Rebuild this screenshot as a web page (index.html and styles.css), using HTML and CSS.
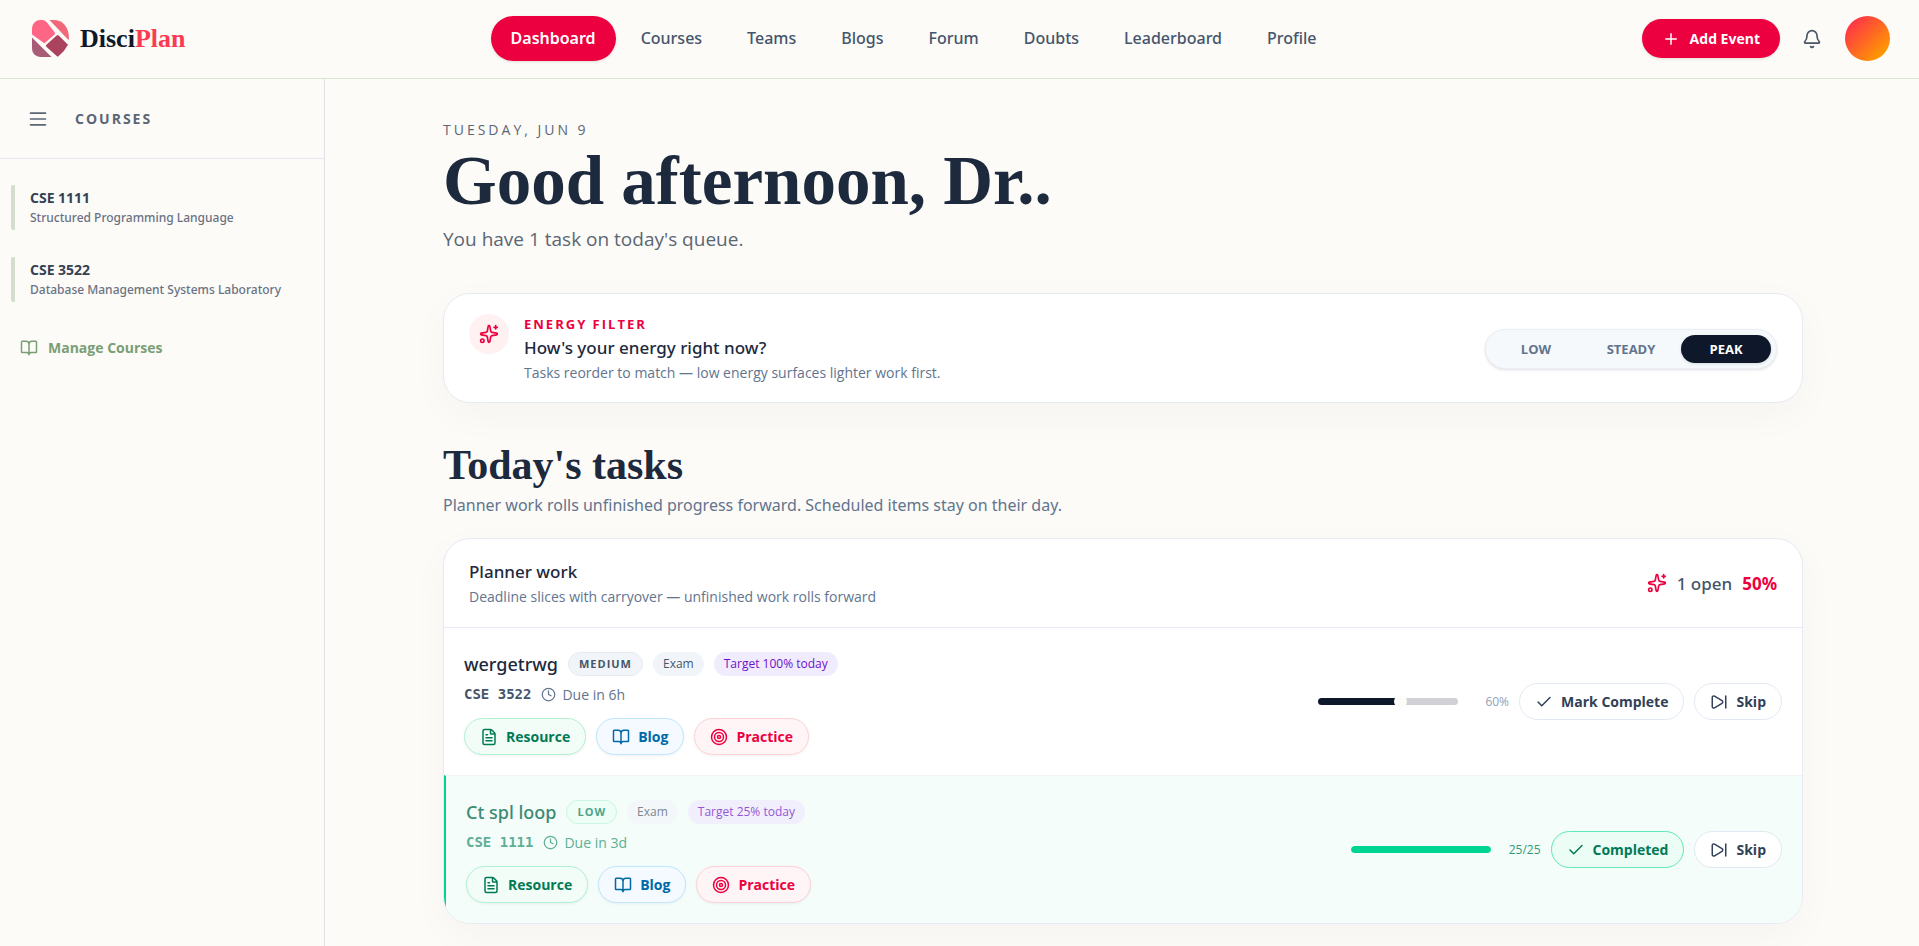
FILE: index.html
```html
<!DOCTYPE html>
<html lang="en">
<head>
<meta charset="utf-8">
<meta name="viewport" content="width=device-width, initial-scale=1">
<title>DisciPlan</title>
<link rel="stylesheet" href="styles.css">
</head>
<body>
<svg class="sprite" aria-hidden="true">
  <symbol id="i-plus" viewBox="0 0 24 24"><path d="M5 12h14M12 5v14"/></symbol>
  <symbol id="i-bell" viewBox="0 0 24 24"><path d="M10.27 21a2 2 0 0 0 3.46 0M3.26 15.33A1 1 0 0 0 4 17h16a1 1 0 0 0 .74-1.67C19.41 13.96 18 12.5 18 8A6 6 0 0 0 6 8c0 4.5-1.41 5.96-2.74 7.33"/></symbol>
  <symbol id="i-menu" viewBox="0 0 24 24"><path d="M3 5h18M3 12h18M3 19h18"/></symbol>
  <symbol id="i-book" viewBox="0 0 24 24"><path d="M12 7v14M3 18a1 1 0 0 1-1-1V4a1 1 0 0 1 1-1h5a4 4 0 0 1 4 4 4 4 0 0 1 4-4h5a1 1 0 0 1 1 1v13a1 1 0 0 1-1 1h-6a3 3 0 0 0-3 3 3 3 0 0 0-3-3z"/></symbol>
  <symbol id="i-sparkles" viewBox="0 0 24 24"><path d="M11.02 2.81a1 1 0 0 1 1.96 0l1.05 5.56a2 2 0 0 0 1.6 1.6l5.56 1.05a1 1 0 0 1 0 1.96l-5.56 1.05a2 2 0 0 0-1.6 1.6l-1.05 5.56a1 1 0 0 1-1.96 0l-1.05-5.56a2 2 0 0 0-1.6-1.6l-5.56-1.05a1 1 0 0 1 0-1.96l5.56-1.05a2 2 0 0 0 1.6-1.6zM20 2v4M22 4h-4"/><circle cx="4" cy="20" r="2"/></symbol>
  <symbol id="i-clock" viewBox="0 0 24 24"><circle cx="12" cy="12" r="10"/><path d="M12 6v6l4 2"/></symbol>
  <symbol id="i-file" viewBox="0 0 24 24"><path d="M6 22a2 2 0 0 1-2-2V4a2 2 0 0 1 2-2h8a2.4 2.4 0 0 1 1.7.7l3.6 3.6a2.4 2.4 0 0 1 .7 1.7v12a2 2 0 0 1-2 2zM14 2v5a1 1 0 0 0 1 1h5M10 9H8M16 13H8M16 17H8"/></symbol>
  <symbol id="i-target" viewBox="0 0 24 24"><circle cx="12" cy="12" r="10"/><circle cx="12" cy="12" r="6"/><circle cx="12" cy="12" r="2"/></symbol>
  <symbol id="i-check" viewBox="0 0 24 24"><path d="M20 6 9 17l-5-5"/></symbol>
  <symbol id="i-skip" viewBox="0 0 24 24"><path d="M21 4v16M6.03 4.29A2 2 0 0 0 3 6v12a2 2 0 0 0 3.03 1.71l10-5.99a2 2 0 0 0 0-3.44z"/></symbol>
</svg>

<header class="topbar">
  <a class="brand" href="#">
    <svg class="brand-mark" viewBox="0 0 36 36" aria-hidden="true">
      <path fill="#ff6685" d="M0 14V8a8 8 0 0 1 8-8h2q3 0 5 3l7 9q1 1 0 2l-9 8q-1 1-2 0z"/>
      <path fill="#f0687a" d="M17 0h4c9 0 15 7 15 18q0 2-1 1z"/>
      <path fill="#a85c75" d="M0 17l19 19H8a8 8 0 0 1-8-8z"/>
      <path fill="#ab435f" d="M14 24l10-9q1-1 2 0l9 9q-3 6-9 11-1 1-2 0L14 26q-1-1 0-2z"/>
    </svg>
    <span class="brand-name">Disci<span class="brand-accent">Plan</span></span>
  </a>
  <nav class="nav">
    <a class="nav-link active" href="#">Dashboard</a>
    <a class="nav-link" href="#">Courses</a>
    <a class="nav-link" href="#">Teams</a>
    <a class="nav-link" href="#">Blogs</a>
    <a class="nav-link" href="#">Forum</a>
    <a class="nav-link" href="#">Doubts</a>
    <a class="nav-link" href="#">Leaderboard</a>
    <a class="nav-link" href="#">Profile</a>
  </nav>
  <div class="actions">
    <button class="add-event" type="button"><svg class="icon"><use href="#i-plus"/></svg>Add Event</button>
    <button class="bell" type="button" aria-label="Notifications"><svg class="icon"><use href="#i-bell"/></svg></button>
    <button class="avatar" type="button" aria-label="Account"></button>
  </div>
</header>

<div class="shell">
  <aside class="sidebar">
    <div class="sidebar-head">
      <button class="menu" type="button" aria-label="Toggle sidebar"><svg class="icon"><use href="#i-menu"/></svg></button>
      <h2 class="sidebar-title">COURSES</h2>
    </div>
    <div class="course-list">
      <a class="course" href="#"><span class="course-code">CSE 1111</span><span class="course-name">Structured Programming Language</span></a>
      <a class="course" href="#"><span class="course-code">CSE 3522</span><span class="course-name">Database Management Systems Laboratory</span></a>
    </div>
    <a class="manage" href="#"><svg class="icon"><use href="#i-book"/></svg>Manage Courses</a>
  </aside>

  <main class="main">
    <p class="date">TUESDAY, JUN 9</p>
    <h1 class="greeting">Good afternoon, Dr..</h1>
    <p class="summary">You have 1 task on today's queue.</p>

    <section class="card energy">
      <span class="energy-icon"><svg class="icon"><use href="#i-sparkles"/></svg></span>
      <div class="energy-text">
        <p class="eyebrow">ENERGY FILTER</p>
        <h2 class="card-title">How's your energy right now?</h2>
        <p class="card-note">Tasks reorder to match — low energy surfaces lighter work first.</p>
      </div>
      <div class="segmented">
        <button type="button">LOW</button>
        <button type="button">STEADY</button>
        <button class="selected" type="button">PEAK</button>
      </div>
    </section>

    <h2 class="section-title">Today's tasks</h2>
    <p class="section-note">Planner work rolls unfinished progress forward. Scheduled items stay on their day.</p>

    <section class="card planner">
      <header class="planner-head">
        <div>
          <h3 class="card-title">Planner work</h3>
          <p class="card-note">Deadline slices with carryover — unfinished work rolls forward</p>
        </div>
        <div class="stats"><svg class="icon"><use href="#i-sparkles"/></svg><span>1 open</span><strong>50%</strong></div>
      </header>

      <article class="task">
        <div class="task-info">
          <div class="task-top"><h4 class="task-name">wergetrwg</h4><span class="pill level">MEDIUM</span><span class="pill">Exam</span><span class="pill goal">Target 100% today</span></div>
          <div class="task-meta"><span class="code">CSE 3522</span><span class="due"><svg class="icon"><use href="#i-clock"/></svg>Due in 6h</span></div>
          <div class="task-links">
            <button class="btn green" type="button"><svg class="icon"><use href="#i-file"/></svg>Resource</button>
            <button class="btn blue" type="button"><svg class="icon"><use href="#i-book"/></svg>Blog</button>
            <button class="btn rose" type="button"><svg class="icon"><use href="#i-target"/></svg>Practice</button>
          </div>
        </div>
        <div class="task-side">
          <input class="slider" type="range" min="0" max="100" value="60" style="--value: 60%" aria-label="Progress of wergetrwg">
          <span class="amount wide">60%</span>
          <button class="btn" type="button"><svg class="icon"><use href="#i-check"/></svg>Mark Complete</button>
          <button class="btn skip" type="button"><svg class="icon"><use href="#i-skip"/></svg>Skip</button>
        </div>
      </article>

      <article class="task done">
        <div class="task-info">
          <div class="task-top"><h4 class="task-name">Ct spl loop</h4><span class="pill level">LOW</span><span class="pill">Exam</span><span class="pill goal">Target 25% today</span></div>
          <div class="task-meta"><span class="code">CSE 1111</span><span class="due"><svg class="icon"><use href="#i-clock"/></svg>Due in 3d</span></div>
          <div class="task-links">
            <button class="btn green" type="button"><svg class="icon"><use href="#i-file"/></svg>Resource</button>
            <button class="btn blue" type="button"><svg class="icon"><use href="#i-book"/></svg>Blog</button>
            <button class="btn rose" type="button"><svg class="icon"><use href="#i-target"/></svg>Practice</button>
          </div>
        </div>
        <div class="task-side">
          <div class="bar"><div class="bar-fill" style="width: 100%"></div></div>
          <span class="amount">25/25</span>
          <button class="btn complete" type="button"><svg class="icon"><use href="#i-check"/></svg>Completed</button>
          <button class="btn skip" type="button"><svg class="icon"><use href="#i-skip"/></svg>Skip</button>
        </div>
      </article>
    </section>
  </main>
</div>
</body>
</html>
```
FILE: styles.css
```css
* { box-sizing: border-box; }

:root {
  --font-text: "Segoe UI", "Open Sans", "Noto Sans", sans-serif;
  --font-medium: "Segoe UI", "Noto Sans", sans-serif;
  --font-display: Georgia, "Liberation Serif", serif;
}

body {
  margin: 0;
  min-height: 100vh;
  display: flex;
  flex-direction: column;
  background: #fcfbf7;
  color: #1d293d;
  font-family: var(--font-text);
  font-size: 16px;
}

h1, h2, h3, h4, p { margin: 0; font-weight: 400; }
a { color: inherit; text-decoration: none; }
button { font: inherit; color: inherit; border: 0; background: none; padding: 0; cursor: pointer; }

.sprite { display: none; }
.icon {
  width: 18px;
  height: 18px;
  flex: none;
  fill: none;
  stroke: currentColor;
  stroke-width: 2;
  stroke-linecap: round;
  stroke-linejoin: round;
}

/* Top bar */
.topbar {
  display: flex;
  align-items: center;
  justify-content: space-between;
  height: 79px;
  padding: 0 29px 1px 32px;
  border-bottom: 1px solid #d9e4d3;
}
.brand { display: flex; align-items: center; gap: 11px; }
.brand-mark { width: 37px; height: 37px; }
.brand-name {
  font-family: var(--font-display);
  font-size: 26px;
  font-weight: 700;
  color: #0f172b;
}
.brand-accent { color: #fb3b52; }
.nav { display: flex; gap: 5px; }
.nav-link {
  padding: 0 20px;
  border-radius: 24px;
  font-family: var(--font-medium);
  font-size: 16px;
  font-weight: 500;
  line-height: 45px;
  color: #45556c;
}
.nav-link.active { background: #ec003f; color: #fff; font-weight: 600; box-shadow: 0 1px 3px #0000001f; }
.actions { display: flex; align-items: center; justify-content: flex-end; }
.add-event {
  display: flex;
  align-items: center;
  gap: 10px;
  height: 39px;
  padding: 0 20px;
  border-radius: 20px;
  background: #ec003f;
  color: #fff;
  font-size: 14px;
  font-weight: 700;
  box-shadow: 0 1px 3px #0000001f;
}
.bell { width: 45px; height: 45px; margin: 0 10px; display: grid; place-items: center; color: #4a5565; }
.bell .icon { width: 20px; height: 20px; }
.avatar { width: 45px; height: 45px; border-radius: 50%; background: linear-gradient(135deg, #ff2056, #fe9a00 85%); }

/* Sidebar */
.shell { display: flex; flex: 1; }
.sidebar { width: 325px; flex: none; border-right: 1px solid #dfe3e8; }
.sidebar-head {
  display: flex;
  align-items: center;
  gap: 27px;
  height: 80px;
  padding: 0 28px;
  border-bottom: 1px solid #e6eaee;
}
.menu { display: grid; color: #5b6675; }
.menu .icon { width: 20px; height: 20px; }
.sidebar-title { font-size: 14px; font-weight: 700; letter-spacing: 2px; color: #5b6675; }
.course-list { display: grid; gap: 27px; padding: 26px 11px 0; }
.course {
  display: grid;
  align-content: center;
  height: 45px;
  padding-left: 15px;
  border-left: 4px solid #d3decf;
  border-radius: 2px;
}
.course-code { font-size: 14px; font-weight: 700; line-height: 21px; color: #364153; }
.course-name { font-family: var(--font-medium); font-size: 12px; font-weight: 500; line-height: 20px; color: #6a7282; white-space: nowrap; }
.manage {
  display: flex;
  align-items: center;
  gap: 10px;
  padding: 36px 20px;
  font-size: 14px;
  font-weight: 700;
  color: #7a9e75;
}

/* Main column */
.main { flex: 1; min-width: 0; max-width: 1440px; margin: 0 auto; padding: 40px 39px 22px 41px; }
.date { font-size: 14px; line-height: 22px; letter-spacing: 3px; color: #5b6675; }
.greeting {
  font-family: var(--font-display);
  font-size: 69px;
  font-weight: 700;
  line-height: 80px;
}
.summary { padding-top: 2px; font-size: 19px; line-height: 32px; color: #5b6675; }
.card {
  background: #fff;
  border: 1px solid #e6eaf2;
  border-radius: 27px;
  box-shadow: 0 12px 40px #0f172b08;
}
.energy { display: flex; align-items: flex-start; margin-top: 38px; padding: 20px 25px 18px; }
.energy-icon {
  display: grid;
  place-items: center;
  width: 40px;
  height: 40px;
  margin-right: 15px;
  border-radius: 50%;
  background: #fff0f1;
  color: #ec003f;
}
.energy-icon .icon { width: 20px; height: 20px; }
.energy-text { flex: 1; }
.eyebrow { font-size: 13px; font-weight: 700; line-height: 20px; letter-spacing: 2px; color: #ec003f; }
.card-title { font-family: var(--font-medium); font-size: 17px; font-weight: 500; line-height: 27px; color: #1d293d; }
.card-note { font-size: 14px; line-height: 23px; color: #62748e; }
.segmented {
  display: grid;
  grid-template-columns: repeat(3, 90px);
  gap: 5px;
  align-self: center;
  padding: 5px;
  border: 1px solid #eaeff5;
  border-radius: 20px;
  background: #f5f9fc;
  box-shadow: 0 1px 3px #0000001f;
}
.segmented button { height: 28px; border-radius: 14px; font-size: 13px; font-weight: 700; color: #62748e; }
.segmented .selected { background: #0f172b; color: #fff; box-shadow: 0 1px 3px #0000001f; }

.section-title {
  margin-top: 38px;
  font-family: var(--font-display);
  font-size: 42px;
  font-weight: 700;
  line-height: 48px;
}
.section-note { margin-bottom: 16px; font-family: var(--font-medium); font-size: 16px; line-height: 33px; color: #62748e; }

.planner { overflow: hidden; }
.planner-head {
  display: flex;
  align-items: center;
  justify-content: space-between;
  padding: 19px 25px;
  border-bottom: 1px solid #e6eaf2;
}
.stats { display: flex; align-items: center; gap: 10px; font-family: var(--font-medium); font-size: 17px; font-weight: 500; color: #45556c; }
.stats .icon { width: 20px; height: 20px; color: #ec003f; }
.stats strong { font-weight: 700; color: #ec003f; }

.task { display: flex; align-items: center; justify-content: space-between; padding: 20px; }
.task.done { border-left: 2px solid #00d492; background: #f4fdf9; border-top: 1px solid #eff5f6; }
.task-top { display: flex; align-items: center; gap: 10px; }
.task-name { font-family: var(--font-medium); font-size: 18px; font-weight: 500; line-height: 32px; }
.pill {
  padding: 0 10px;
  border-radius: 12px;
  background: #f1f5f9;
  font-size: 12px;
  font-weight: 500;
  line-height: 24px;
  color: #45556c;
}
.pill.level { border: 1px solid #e6ebf1; font-size: 11px; font-weight: 700; line-height: 22px; letter-spacing: 1px; }
.pill.goal { background: #f1ebfe; color: #6d11c9; }
.task-meta { display: flex; align-items: center; gap: 10px; height: 26px; margin: 1px 0 11px; }
.code { font-family: "DejaVu Sans Mono", monospace; font-size: 14px; font-weight: 700; color: #45556c; }
.due { display: flex; align-items: center; gap: 6px; font-size: 14px; color: #62748e; }
.due .icon { width: 15px; height: 15px; }
.task-links { display: flex; gap: 10px; }
.btn {
  display: flex;
  align-items: center;
  gap: 8px;
  height: 37px;
  padding: 0 15px;
  border: 1px solid #e2e8f2;
  border-radius: 19px;
  background: #fff;
  font-size: 14px;
  font-weight: 700;
  color: #314158;
}
.btn.green { border-color: #b0f2d2; background: #f3fdf8; color: #007a55; box-shadow: 0 1px 3px #0000000f; }
.btn.blue { border-color: #c0e6fd; background: #f4faff; color: #0069a8; box-shadow: 0 1px 3px #0000000f; }
.btn.rose { border-color: #ffd0d6; background: #fff5f6; color: #ec003f; box-shadow: 0 1px 3px #0000000f; }
.btn.complete { border-color: #5ee9b5; background: #ecfdf5; color: #007a55; }

.task-side { display: flex; align-items: center; gap: 10px; }
.slider {
  appearance: none;
  width: 140px;
  height: 7px;
  margin: 0 7px 0 0;
  border-radius: 4px;
  background: linear-gradient(to right, #0f172b var(--value), #d0d0d5 var(--value));
}
.slider::-webkit-slider-thumb { appearance: none; width: 13px; height: 13px; border-radius: 50%; background: #fcfdf8; }
.amount { font-size: 12px; color: #90a1b9; }
.amount.wide { width: 34px; text-align: right; }
.bar { width: 140px; height: 7px; margin-right: 8px; border-radius: 4px; background: #d0fae5; overflow: hidden; }
.bar-fill { height: 100%; background: #00d492; border-radius: 4px; }

.done .task-name { color: #3c8a74; }
.done .pill { background: #f3f7fa; color: #7c8794; }
.done .pill.level { border-color: #c9f7e0; background: #effdf7; color: #4aa589; }
.done .pill.goal { background: #f2effd; color: #9257d6; }
.done .code, .done .due { color: #5fae96; }
.done .amount { color: #2f9b7a; }
```
